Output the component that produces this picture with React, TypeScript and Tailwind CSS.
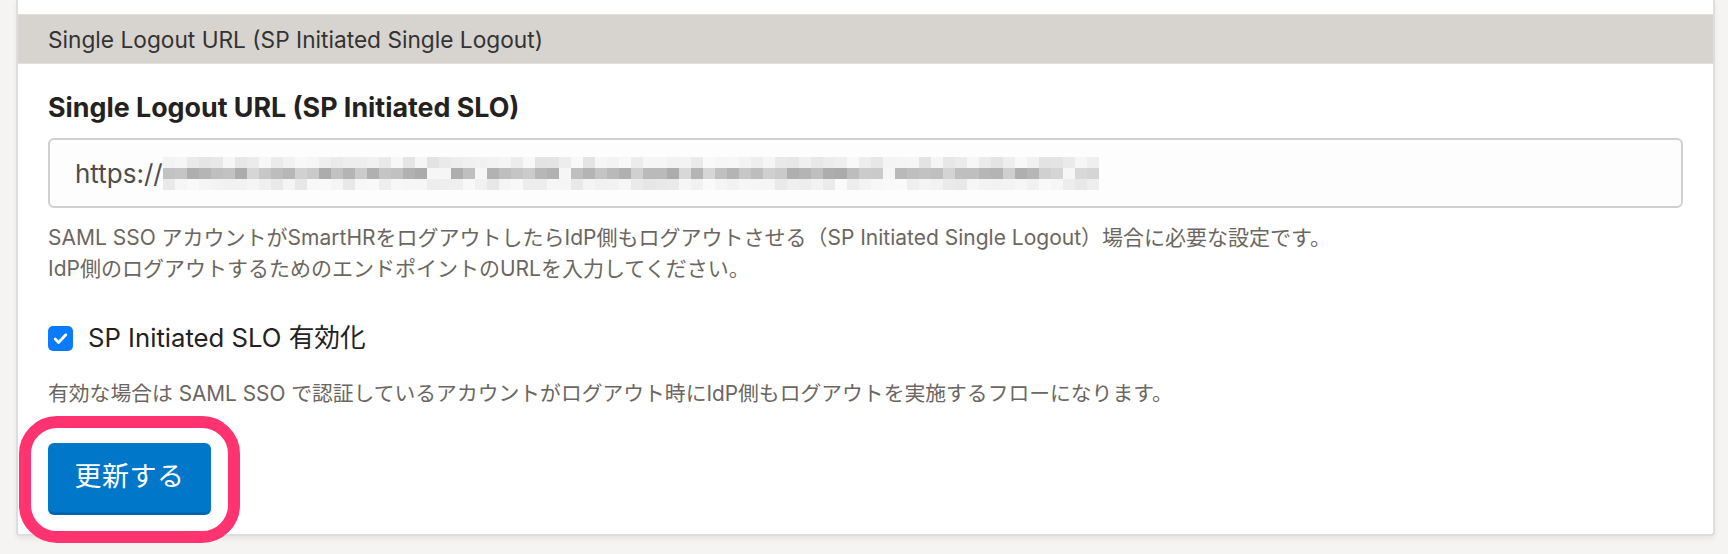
import React from "react";

// ぼかし済みURL部分のモザイク（決め打ちの擬似乱数）
function mosaic(cols: number, seed: number, base: number, spread: number, gapRate: number) {
  const out: string[] = [];
  let s = seed;
  for (let i = 0; i < cols; i++) {
    s = (s * 9301 + 49297) % 233280;
    const r = s / 233280;
    const gap = r > 1 - gapRate;
    const v = gap ? 246 : Math.round(base + r * spread);
    out.push(`rgb(${v},${v},${v})`);
  }
  return out;
}

const COLS = 78;
const rowTop = mosaic(COLS, 11, 226, 26, 0.1);
const rowMid = mosaic(COLS, 7, 168, 52, 0.07);
const rowBottom = mosaic(COLS, 23, 230, 22, 0.1);

function BlurredUrl() {
  return (
    <div className="flex flex-col">
      {[rowTop, rowMid, rowBottom].map((row, ri) => (
        <div key={ri} className="flex">
          {row.map((c, i) => (
            <div key={i} className="w-[12px] h-[11px]" style={{ backgroundColor: c }} />
          ))}
        </div>
      ))}
    </div>
  );
}

export default function App() {
  const font = { fontFamily: 'Inter, "Noto Sans CJK JP", sans-serif' };
  return (
    <div className="min-h-[554px] bg-[#f5f4f2] pl-[16px] pr-[13px] pb-[16px]" style={font}>
      <div className="bg-white border-x-2 border-b-2 border-[#dedede] rounded-b-[4px] shadow-[0_3px_5px_rgba(0,0,0,0.06)]">
        <div className="h-[14px]" />
        {/* セクション見出し */}
        <div className="h-[50px] bg-[#d7d3cf] border-y border-[#e2dfdc] flex items-center px-[30px] pt-[2px] text-[22.7px] text-[#333]">
          Single Logout URL (SP Initiated Single Logout)
        </div>

        <div className="px-[30px] pt-[27px] pb-[19px]">
          <label className="block text-[26.8px] leading-[32px] font-bold text-[#23221f]">
            Single Logout URL (SP Initiated SLO)
          </label>

          <div className="mt-[15px] h-[70px] border-2 border-[#d0d0d0] rounded-[6px] bg-[#fdfdfd] flex items-center pl-[25px]">
            <span className="text-[26px] text-[#4d4d4d]">https://</span>
            <BlurredUrl />
          </div>

          <p className="mt-[14px] text-[21px] leading-[31px] text-[#6b6661]">
            SAML SSO アカウントがSmartHRをログアウトしたらIdP側もログアウトさせる（SP Initiated Single Logout）場合に必要な設定です。
            <br />
            IdP側のログアウトするためのエンドポイントのURLを入力してください。
          </p>

          <label className="mt-[38px] flex items-center gap-[15px] h-[32px]">
            <span className="w-[25px] h-[25px] rounded-[5px] bg-[#0a7aff] flex items-center justify-center">
              <svg width="17" height="17" viewBox="0 0 16 16" fill="none">
                <path d="M3 8.5l3.2 3.3L13 4.5" stroke="white" strokeWidth="2.6" strokeLinecap="round" strokeLinejoin="round" />
              </svg>
            </span>
            <span className="text-[25.7px] text-[#23221f]">SP Initiated SLO 有効化</span>
          </label>

          <p className="mt-[24px] text-[20.8px] leading-[31px] text-[#6b6661]">
            有効な場合は SAML SSO で認証しているアカウントがログアウト時にIdP側もログアウトを実施するフローになります。
          </p>

          <div className="mt-[34px] relative inline-block">
            <button className="w-[163px] h-[72px] rounded-[6px] bg-[#0077c8] border-b-[3px] border-[#0068b0] text-white text-[27px] tracking-[0.5px]">
              更新する
            </button>
            {/* 注釈の枠 */}
            <div className="absolute -left-[29px] -right-[29px] -top-[27px] -bottom-[28px] border-[12px] border-[#ff336f] rounded-[38px] pointer-events-none" />
          </div>
        </div>
      </div>
    </div>
  );
}
